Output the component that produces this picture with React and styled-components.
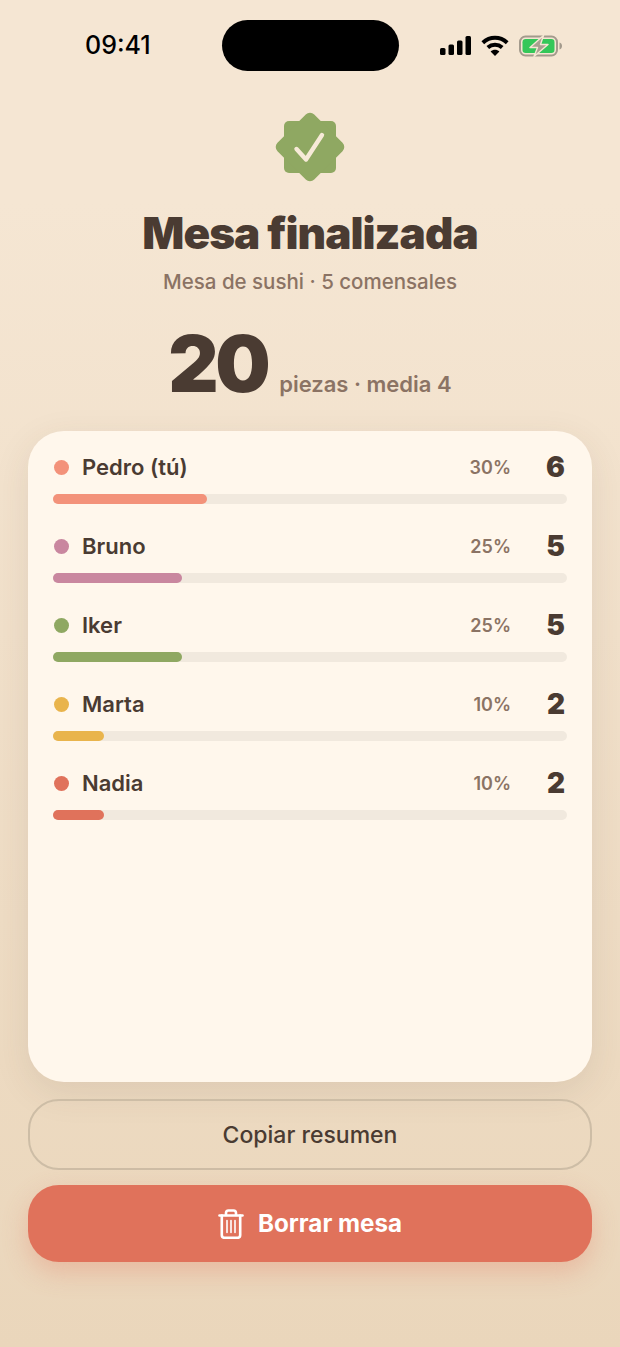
import styled, { createGlobalStyle } from "styled-components";

const GlobalStyle = createGlobalStyle`
  html, body {
    margin: 0;
    padding: 0;
  }
  * {
    box-sizing: border-box;
  }
`;

const Page = styled.div`
  width: 620px;
  height: 1347px;
  overflow: hidden;
  display: flex;
  flex-direction: column;
  background: linear-gradient(180deg, #f5e6d3 0%, #f5e6d3 15%, #ead6bb 100%);
  font-family: Inter, "Noto Sans", sans-serif;
  color: #4a3b32;
`;

const StatusBar = styled.div`
  height: 92px;
  padding: 20px 57px 0;
  display: grid;
  grid-template-columns: 1fr 177px 1fr;
  align-items: start;
`;

const Time = styled.div`
  margin-left: 28px;
  height: 51px;
  line-height: 51px;
  font-size: 25px;
  font-weight: 500;
  color: #000;
  white-space: nowrap;
`;

const Island = styled.div`
  height: 51px;
  border-radius: 26px;
  background: #000;
`;

const StatusIcons = styled.div`
  height: 51px;
  display: flex;
  align-items: center;
  justify-content: flex-end;
  gap: 10px;
`;

const Hero = styled.div`
  display: flex;
  flex-direction: column;
  align-items: center;
  padding-top: 20px;
`;

const Title = styled.h1`
  margin: 23px 0 0;
  font-size: 44px;
  line-height: 56px;
  font-weight: 900;
  letter-spacing: -0.95px;
`;

const Subtitle = styled.p`
  margin: 8px 0 0;
  font-size: 20.5px;
  line-height: 26px;
  font-weight: 500;
  color: #8b7364;
`;

const Totals = styled.div`
  margin-top: 21px;
  height: 96px;
  display: flex;
  align-items: baseline;
  gap: 12px;
`;

const Total = styled.span`
  font-size: 78px;
  line-height: 96px;
  font-weight: 900;
  letter-spacing: -3.5px;
`;

const TotalLabel = styled.span`
  font-size: 22px;
  font-weight: 600;
  color: #8b7364;
`;

const Card = styled.div`
  margin: 19px 28px 0;
  height: 651px;
  padding: 12px 25px 0;
  border-radius: 36px;
  background: #fff7ec;
  box-shadow: 0 10px 36px rgba(74, 59, 50, 0.1);
  display: flex;
  flex-direction: column;
  gap: 18px;
`;

const Row = styled.div`
  display: flex;
  flex-direction: column;
  gap: 3px;
`;

const RowHead = styled.div`
  height: 48px;
  padding-right: 2px;
  display: flex;
  align-items: center;
`;

const Dot = styled.span`
  width: 15px;
  height: 15px;
  margin-left: 1px;
  border-radius: 50%;
  background: ${(p) => p.$color};
`;

const Name = styled.span`
  margin-left: 13px;
  flex: 1;
  font-size: 22px;
  font-weight: 600;
`;

const Percent = styled.span`
  font-size: 18px;
  font-weight: 600;
  color: #8b7364;
`;

const Count = styled.span`
  width: 54px;
  text-align: right;
  font-size: 28px;
  font-weight: 900;
`;

const Track = styled.div`
  height: 10px;
  border-radius: 5px;
  background: #f1e9de;
`;

const Fill = styled.div`
  height: 100%;
  border-radius: 5px;
  background: ${(p) => p.$color};
`;

const Actions = styled.div`
  margin: 17px 28px 0;
  display: flex;
  flex-direction: column;
  gap: 15px;
`;

const GhostButton = styled.button`
  height: 71px;
  border: 2.5px solid #cdbda6;
  border-radius: 31px;
  background: transparent;
  font-family: inherit;
  font-size: 23px;
  font-weight: 500;
  color: #4a3b32;
`;

const DangerButton = styled.button`
  height: 77px;
  border: none;
  border-radius: 31px;
  background: #e0725b;
  box-shadow: 0 10px 26px rgba(224, 114, 91, 0.3);
  font-family: inherit;
  font-size: 24.2px;
  font-weight: 700;
  color: #fff;
  display: flex;
  align-items: center;
  justify-content: center;
  gap: 14px;
`;

const players = [
  { name: "Pedro (tú)", pct: 30, count: 6, color: "#f3927a" },
  { name: "Bruno", pct: 25, count: 5, color: "#c9879f" },
  { name: "Iker", pct: 25, count: 5, color: "#8fa862" },
  { name: "Marta", pct: 10, count: 2, color: "#e9b44c" },
  { name: "Nadia", pct: 10, count: 2, color: "#e0725b" },
];

const SignalIcon = () => (
  <svg width="31" height="19" viewBox="0 0 31 19" fill="#000">
    <rect x="0" y="12" width="5.5" height="7" rx="1.5" />
    <rect x="8.5" y="8.5" width="5.5" height="10.5" rx="1.5" />
    <rect x="17" y="4.5" width="5.5" height="14.5" rx="1.5" />
    <rect x="25.5" y="0" width="5.5" height="19" rx="1.5" />
  </svg>
);

const WifiIcon = () => (
  <svg width="28" height="21" viewBox="0 0 28 21" fill="none" stroke="#000" strokeWidth="4">
    <path d="M1.8 7.8C9 1.2 19 1.2 26.2 7.8" />
    <path d="M6.8 12.4C11 8.8 17 8.8 21.2 12.4" />
    <path d="M14 21l-4.4-4.6c2.5-2.1 6.3-2.1 8.8 0z" fill="#000" stroke="none" />
  </svg>
);

const BatteryIcon = () => (
  <svg width="44" height="22" viewBox="0 0 44 22" fill="none">
    <rect x="1" y="1.5" width="37" height="19" rx="5.5" stroke="#a39a8c" strokeWidth="2" />
    <rect x="3.5" y="4" width="32" height="14" rx="3.2" fill="#34c759" />
    <path d="M40.5 7.5c1.6.4 2.5 1.8 2.5 3.5s-.9 3.1-2.5 3.5z" fill="#a39a8c" />
    <path d="M24.5 0.5 11 12.5h7.5L15 21.5 29 9.5h-7.5z" fill="#a8a090" stroke="#f5e6d3" strokeWidth="1.4" strokeLinejoin="round" />
  </svg>
);

const BadgeIcon = () => (
  <svg width="70" height="70" viewBox="0 0 70 70">
    <rect x="9" y="9" width="52" height="52" rx="5" fill="#8fa862" />
    <rect x="9" y="9" width="52" height="52" rx="6" fill="#8fa862" transform="rotate(45 35 35)" />
    <path
      d="M21.5 37l9.5 10.5L47 23"
      fill="none"
      stroke="#f7ead8"
      strokeWidth="4.4"
      strokeLinecap="round"
      strokeLinejoin="round"
    />
  </svg>
);

const TrashIcon = () => (
  <svg width="26" height="30" viewBox="0 0 26 30" fill="none" stroke="#fff" strokeWidth="2.6" strokeLinecap="round" strokeLinejoin="round">
    <path d="M1.5 6.5h23" />
    <path d="M8 6V4a2.5 2.5 0 0 1 2.5-2.5h5A2.5 2.5 0 0 1 18 4v2" />
    <path d="M3.8 6.5v19.5a2.8 2.8 0 0 0 2.8 2.8h12.8a2.8 2.8 0 0 0 2.8-2.8V6.5" />
    <path d="M9 11.5v12M13 11.5v12M17 11.5v12" strokeWidth="1.6" />
  </svg>
);

const App = () => {
  return (
    <>
      <GlobalStyle />
      <Page>
        <StatusBar>
          <Time>09:41</Time>
          <Island />
          <StatusIcons>
            <SignalIcon />
            <WifiIcon />
            <BatteryIcon />
          </StatusIcons>
        </StatusBar>

        <Hero>
          <BadgeIcon />
          <Title>Mesa finalizada</Title>
          <Subtitle>Mesa de sushi · 5 comensales</Subtitle>
          <Totals>
            <Total>20</Total>
            <TotalLabel>piezas · media 4</TotalLabel>
          </Totals>
        </Hero>

        <Card>
          {players.map((p) => (
            <Row key={p.name}>
              <RowHead>
                <Dot $color={p.color} />
                <Name>{p.name}</Name>
                <Percent>{p.pct}%</Percent>
                <Count>{p.count}</Count>
              </RowHead>
              <Track>
                <Fill $color={p.color} style={{ width: `${p.pct}%` }} />
              </Track>
            </Row>
          ))}
        </Card>

        <Actions>
          <GhostButton>Copiar resumen</GhostButton>
          <DangerButton>
            <TrashIcon />
            Borrar mesa
          </DangerButton>
        </Actions>
      </Page>
    </>
  );
};

export default App;
